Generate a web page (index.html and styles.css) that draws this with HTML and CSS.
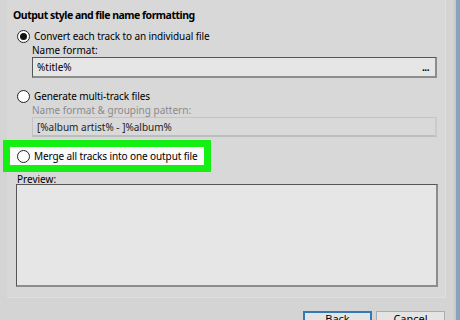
FILE: index.html
```html
<!DOCTYPE html>
<html lang="en">
<head>
  <meta charset="UTF-8">
  <title>Output style and file name formatting</title>
  <link rel="stylesheet" href="styles.css">
</head>
<body>
  <div class="window">
    <div class="content">
      <div class="group">
        <h1 class="title">Output style and file name formatting</h1>

        <div class="option">
          <span class="radio checked"></span>
          <span>Convert each track to an individual file</span>
        </div>
        <div class="sub">
          <div class="label">Name format:</div>
          <div class="field">
            <span>%title%</span>
            <span class="dots">...</span>
          </div>
        </div>

        <div class="option second">
          <span class="radio"></span>
          <span>Generate multi-track files</span>
        </div>
        <div class="sub">
          <div class="label disabled">Name format &amp; grouping pattern:</div>
          <div class="field off">
            <span>[%album artist% - ]%album%</span>
          </div>
        </div>

        <div class="highlight">
          <div class="option">
            <span class="radio"></span>
            <span>Merge all tracks into one output file</span>
          </div>
        </div>

        <div class="preview-label">Preview:</div>
        <div class="preview"></div>
      </div>

      <div class="buttons">
        <button class="btn default">Back</button>
        <button class="btn">Cancel</button>
      </div>
    </div>
    <div class="frame"></div>
  </div>
</body>
</html>
```

FILE: styles.css
```css
body {
  margin: 0;
  font-family: "Noto Sans", "Open Sans", sans-serif;
  font-size: 10px;
  color: #000;
}
.window {
  display: flex;
  width: 460px;
  height: 320px;
  overflow: hidden;
  background-color: #d4d4d4;
}
.content {
  flex: 1;
}
.frame {
  width: 4px;
  border-left: 2px solid #c9c9c9;
  background-color: #8aa3bd;
}
.group {
  margin-left: 7px;
  width: 439px;
  height: 298px;
  box-sizing: border-box;
  background-color: #d8d8d8;
  border-right: 1px solid #dedede;
  border-bottom: 1px solid #dedede;
}
.title {
  margin: 0;
  padding: 8px 0 0 6px;
  height: 23px;
  box-sizing: border-box;
  font-size: 10.5px;
  font-weight: bold;
  letter-spacing: -0.5px;
  line-height: 15px;
}
.option {
  display: flex;
  align-items: center;
  gap: 4px;
  height: 16px;
  padding-left: 10px;
  margin-top: 5px;
  white-space: nowrap;
  letter-spacing: -0.1px;
}
.option.second {
  margin-top: 10px;
}
.radio {
  flex: none;
  width: 11px;
  height: 11px;
  border: 1px solid #222;
  border-radius: 50%;
  background-color: #fff;
  box-sizing: content-box;
  position: relative;
}
.radio.checked::after {
  content: "";
  position: absolute;
  left: 2px;
  top: 2px;
  width: 7px;
  height: 7px;
  border-radius: 50%;
  background-color: #111;
}
.sub {
  padding-left: 25px;
  padding-right: 8px;
}
.label {
  height: 13px;
  line-height: 13px;
}
.label.disabled {
  color: #8a8a8a;
}
.field {
  display: flex;
  justify-content: space-between;
  align-items: center;
  height: 21px;
  box-sizing: border-box;
  padding: 0 6px 0 4px;
  background-color: #e6e6e6;
  border: 1px solid #555;
  border-right: 2px solid #8c8c8c;
  border-bottom: 2px solid #8c8c8c;
}
.field.off {
  height: 20px;
  background-color: #d9d9d9;
  border: 1px solid #c4c4c4;
  border-bottom: 2px solid #bdbdbd;
  border-right: 2px solid #cbcbcb;
  color: #222;
}
.dots {
  font-weight: bold;
  letter-spacing: -0.5px;
}
.highlight {
  margin: 3px 0 0 -4px;
  width: 208px;
  height: 32px;
  box-sizing: border-box;
  border: 7px solid #14f014;
  background-color: #fafafa;
}
.highlight .option {
  margin-top: 1px;
  padding-left: 7px;
}
.preview-label {
  padding-left: 10px;
  height: 12px;
  line-height: 14px;
}
.preview {
  margin-left: 9px;
  width: 422px;
  height: 103px;
  box-sizing: border-box;
  background-color: #e6e6e6;
  border: 1px solid #555;
  border-right: 2px solid #8c8c8c;
  border-bottom: 2px solid #8c8c8c;
}
.buttons {
  display: flex;
  justify-content: flex-end;
  gap: 4px;
  padding: 13px 9px 0 0;
}
.btn {
  width: 69px;
  height: 24px;
  font-family: inherit;
  font-size: 11px;
  line-height: 12px;
  background-color: #e4e4e4;
  border: 1px solid #adadad;
  padding: 0 0 8px;
}
.btn.default {
  border: 2px solid #3379b7;
}
```
